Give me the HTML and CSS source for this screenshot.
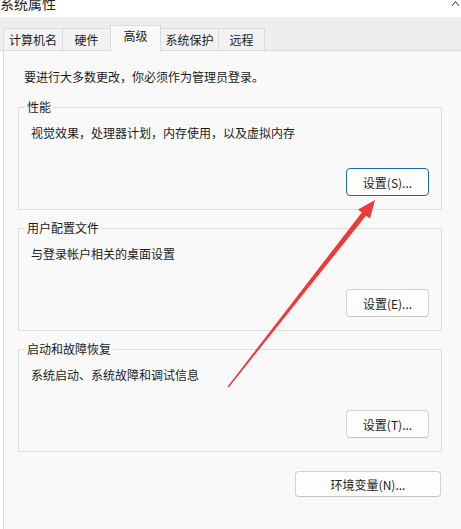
FILE: index.html
```html
<!DOCTYPE html>
<html lang="zh-CN">
<head>
    <meta charset="UTF-8">
    <title>系统属性</title>
    <link rel="stylesheet" href="styles.css">
</head>
<body>
    <div class="window">
        <div class="titlebar">
            <span class="title">系统属性</span>
            <svg class="corner" width="9" height="6" viewBox="0 0 9 6"><path d="M1 6 L4.5 1.5 L8 6" fill="none" stroke="#333" stroke-width="1"/></svg>
        </div>

        <div class="tabs">
            <div class="tab tab-name">计算机名</div>
            <div class="tab tab-hw">硬件</div>
            <div class="tab tab-adv active">高级</div>
            <div class="tab tab-prot">系统保护</div>
            <div class="tab tab-remote">远程</div>
        </div>

        <div class="panel">
            <p class="intro">要进行大多数更改，你必须作为管理员登录。</p>

            <fieldset class="group">
                <legend>性能</legend>
                <p class="desc">视觉效果，处理器计划，内存使用，以及虚拟内存</p>
                <div class="actions">
                    <button class="btn btn-default">设置(S)...</button>
                </div>
            </fieldset>

            <fieldset class="group">
                <legend>用户配置文件</legend>
                <p class="desc">与登录帐户相关的桌面设置</p>
                <div class="actions">
                    <button class="btn">设置(E)...</button>
                </div>
            </fieldset>

            <fieldset class="group">
                <legend>启动和故障恢复</legend>
                <p class="desc">系统启动、系统故障和调试信息</p>
                <div class="actions">
                    <button class="btn">设置(T)...</button>
                </div>
            </fieldset>

            <div class="env-row">
                <button class="btn btn-wide">环境变量(N)...</button>
            </div>
        </div>

        <!-- 红色标注箭头 -->
        <svg class="arrow" width="461" height="529" viewBox="0 0 461 529">
            <polygon fill="#ef3a3a" points="375,200 370,218.6 366,215.8 228.6,387.4 227.6,386.6 361.8,212.4 358,209.6"/>
        </svg>
    </div>
</body>
</html>
```

FILE: styles.css
```css
body {
    margin: 0;
    background-color: #ffffff;
    font-family: "Noto Sans CJK SC", "Microsoft YaHei", sans-serif;
    font-size: 12px;
    color: #1b1b1b;
}
.window {
    position: relative;
    width: 461px;
    height: 529px;
    overflow: hidden;
}
.titlebar {
    height: 17px;
    overflow: hidden;
    display: flex;
    justify-content: space-between;
    align-items: flex-start;
}
.title {
    display: block;
    margin-top: -5px;
    font-size: 14px;
    line-height: 16px;
    color: #222;
}
.corner {
    margin-right: 1px;
}
.tabs {
    display: flex;
    align-items: flex-end;
    height: 33px;
    padding-left: 3px;
    background-color: #eeeeee;
    border-bottom: 1px solid #dadada;
}
.tab {
    box-sizing: border-box;
    height: 22px;
    padding-top: 3px;
    line-height: 16px;
    text-align: center;
    background-color: #f2f2f2;
    border: 1px solid #dcdcdc;
    border-bottom: none;
    margin-right: -1px;
}
.tab-name { width: 60px; }
.tab-hw { width: 49px; }
.tab-adv { width: 51px; }
.tab-prot { width: 59px; }
.tab-remote { width: 47px; }
.tab.active {
    position: relative;
    height: 26px;
    margin-bottom: -1px;
    padding-top: 2px;
    background-color: #f9f9f9;
    z-index: 1;
}
.panel {
    box-sizing: border-box;
    height: 478px;
    margin-left: 3px;
    padding: 18px 0 0 14px;
    background-color: #f9f9f9;
    border-left: 1px solid #dadada;
}
.intro {
    margin: 0 0 14px 6px;
    line-height: 16px;
}
.group {
    box-sizing: border-box;
    width: 424px;
    margin: 0 0 10px 0;
    padding: 10px 12px 13px 6px;
    border: 1px solid #dedede;
}
.group legend {
    padding: 0 2px;
    line-height: 16px;
}
.desc {
    margin: 0 0 0 6px;
    line-height: 16px;
}
.actions {
    display: flex;
    justify-content: flex-end;
    margin-top: 27px;
}
.btn {
    box-sizing: border-box;
    width: 83px;
    height: 28px;
    padding: 0;
    font-family: inherit;
    font-size: 12px;
    color: #1b1b1b;
    background-color: #fdfdfd;
    border: 1px solid #d3d3d3;
    border-bottom-color: #c4c4c4;
    border-radius: 4px;
}
.btn-default {
    border: 1px solid #1d6aa8;
}
.env-row {
    display: flex;
    justify-content: flex-end;
    width: 423px;
    margin-top: 19px;
}
.btn-wide {
    width: 146px;
    height: 26px;
}
.arrow {
    position: absolute;
    left: 0;
    top: 0;
    pointer-events: none;
}
```
